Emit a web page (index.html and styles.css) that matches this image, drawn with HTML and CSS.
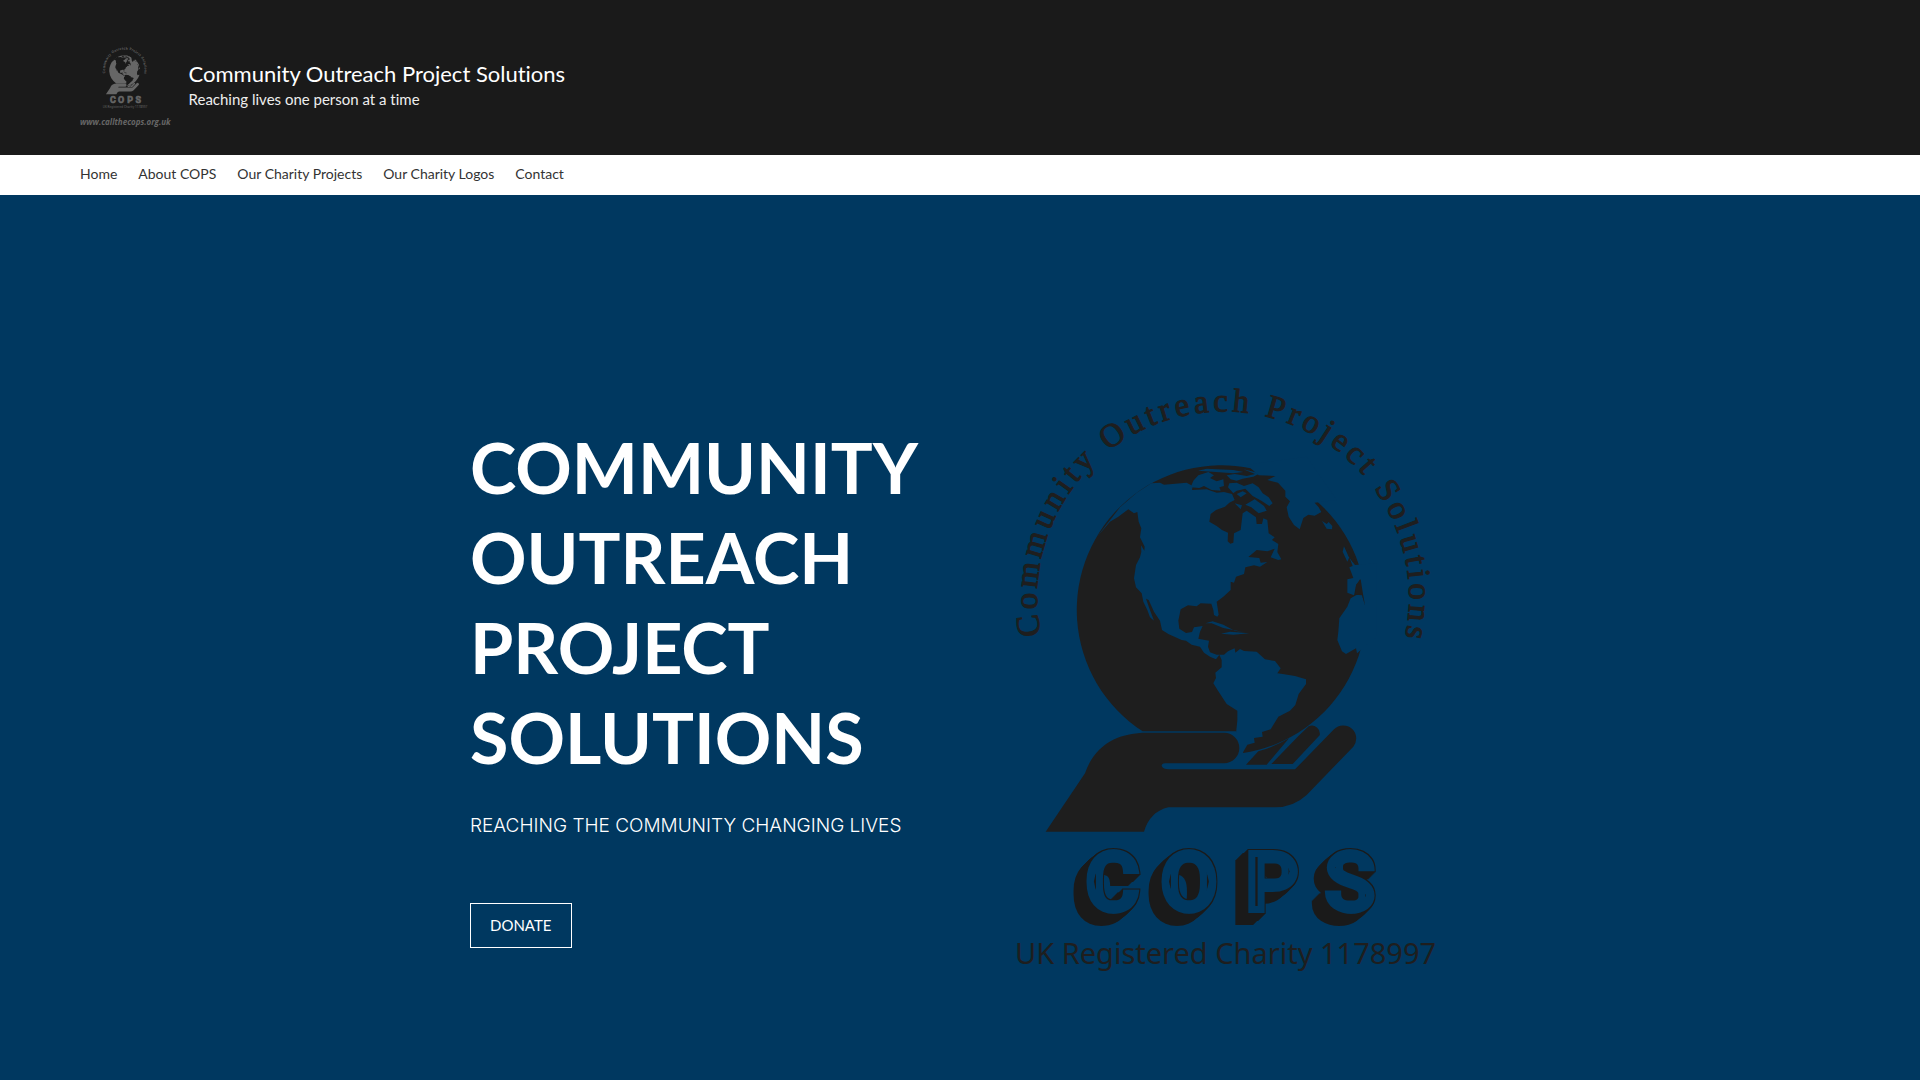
FILE: index.html
```html
<!DOCTYPE html>
<html lang="en">
<head>
    <meta charset="UTF-8">
    <meta name="viewport" content="width=device-width, initial-scale=1.0">
    <title>Community Outreach Project Solutions</title>
    <link rel="stylesheet" href="styles.css">
</head>
<body>
    <header class="header">
        <div class="brand">
            <svg class="brand-mark" viewBox="0 0 450 620" aria-hidden="true"><use href="#cops-logo"/></svg>
            <span class="brand-url">www.callthecops.org.uk</span>
        </div>
        <div class="brand-text">
            <p class="site-title">Community Outreach Project Solutions</p>
            <p class="tagline">Reaching lives one person at a time</p>
        </div>
    </header>

    <nav class="nav">
        <a href="#">Home</a>
        <a href="#">About COPS</a>
        <a href="#">Our Charity Projects</a>
        <a href="#">Our Charity Logos</a>
        <a href="#">Contact</a>
    </nav>

    <main class="hero">
        <div class="hero-inner">
            <div class="hero-text">
                <h1>COMMUNITY OUTREACH PROJECT SOLUTIONS</h1>
                <p class="subtitle">REACHING THE COMMUNITY CHANGING LIVES</p>
                <button class="donate" type="button">DONATE</button>
            </div>
            <svg class="hero-logo" viewBox="0 0 450 620" role="img" aria-label="COPS logo">
                <defs>
                    <path id="arc" d="M41 265 A186 186 0 1 1 401 282"/>
                    <!-- outline, centre line and solid block shadow for the COPS letters -->
                    <filter id="block" x="-20%" y="-20%" width="140%" height="140%" color-interpolation-filters="sRGB">
                        <feOffset in="SourceAlpha" dx="-1" dy="1" result="a"/>
                        <feMerge result="s1"><feMergeNode in="SourceAlpha"/><feMergeNode in="a"/></feMerge>
                        <feOffset in="s1" dx="-2" dy="2" result="b"/>
                        <feMerge result="s2"><feMergeNode in="s1"/><feMergeNode in="b"/></feMerge>
                        <feOffset in="s2" dx="-4" dy="4" result="c"/>
                        <feMerge result="s3"><feMergeNode in="s2"/><feMergeNode in="c"/></feMerge>
                        <feOffset in="s3" dx="-5" dy="4" result="d"/>
                        <feMerge result="s4"><feMergeNode in="s3"/><feMergeNode in="d"/></feMerge>
                        <feFlood class="ink-flood" result="ink"/>
                        <feComposite in="ink" in2="s4" operator="in" result="shadow"/>
                        <feMorphology in="SourceAlpha" operator="erode" radius="1" result="inner"/>
                        <feFlood class="paper-flood" result="paper"/>
                        <feComposite in="paper" in2="inner" operator="in" result="face"/>
                        <feMorphology in="SourceAlpha" operator="erode" radius="8" result="core"/>
                        <feComposite in="ink" in2="core" operator="in" result="line"/>
                        <feMerge>
                            <feMergeNode in="shadow"/>
                            <feMergeNode in="face"/>
                            <feMergeNode in="line"/>
                        </feMerge>
                    </filter>
                </defs>
                <symbol id="cops-logo" viewBox="0 0 450 620">
                    <text class="arc-text"><textPath href="#arc">Community Outreach Project Solutions</textPath></text>

                    <!-- globe -->
                    <svg x="60" y="80" width="320" height="310" viewBox="0 0 960 930">
                        <path class="ink" d="M248 844 A434 434 0 1 1 550 909 L528 844 Z"/>
                        <path class="paper" d="M110 262 L150 215 175 200 205 178 222 190 232 186 236 215 244 235 240 262 254 290 253 302 243 286 244 305 240 322 228 345 222 385 228 412 245 430 250 455 262 480 270 502 282 512 268 475 258 446 266 450 282 485 300 512 306 540 325 552 365 570 378 572 395 584 420 590 432 608 450 620 468 628 478 614 485 630 485 652 466 668 468 684 460 700 474 722 500 762 532 782 532 812 528 850 528 920 546 912 562 884 584 878 582 864 608 860 606 846 632 838 655 800 690 782 706 765 716 732 738 702 738 688 705 678 668 672 652 670 662 655 645 633 615 628 590 605 552 603 540 597 526 608 524 595 504 604 492 614 470 614 450 607 444 590 447 572 415 566 420 545 428 528 402 532 396 546 378 549 358 536 355 512 362 478 384 466 410 469 422 460 454 461 460 480 462 495 472 500 476 494 470 455 490 440 512 420 512 395 522 398 528 380 552 372 556 352 582 346 600 350 622 336 602 338 598 324 565 321 590 300 622 304 644 296 632 322 655 330 664 328 652 306 655 282 636 270 644 262 626 250 622 210 610 205 606 222 590 222 588 202 560 182 548 190 542 240 522 250 520 278 511 281 503 274 504 248 486 240 470 228 448 215 452 192 468 180 495 170 508 158 524 150 516 132 492 126 470 128 440 118 396 120 398 108 380 98 312 104 300 98 274 100 230 128 180 172 Z"/>
                        <path class="paper" d="M400 92 L415 76 445 66 462 76 450 84 470 94 490 88 492 108 478 112 482 122 455 120 432 108 418 114 392 112 Z M414 62 L440 56 520 60 550 66 520 70 Z M500 76 L524 72 560 78 585 72 550 58 600 70 580 80 548 86 530 92 512 88 Z M508 100 L530 98 552 108 578 100 596 112 608 130 626 142 638 160 628 168 604 152 578 138 556 116 530 122 520 130 504 112 Z M530 132 L548 124 560 130 542 142 Z M556 164 L584 148 612 168 620 182 596 190 574 172 Z M524 160 L546 166 542 178 Z"/>
                        <path class="paper" d="M560 44 L596 76 646 78 622 90 654 98 676 122 676 140 690 154 680 172 686 200 702 225 719 238 730 204 745 194 764 197 784 186 776 172 764 158 830 150 740 20 Z"/>
                        <path class="paper" d="M786 213 L800 222 806 216 817 228 816 238 800 236 Z M436 520 L458 514 490 524 524 542 550 546 520 540 490 534 455 520 Z M483 551 L510 545 568 550 520 554 Z"/>
                        <path class="paper" d="M885 345 L866 320 852 288 848 305 862 335 868 322 878 348 868 352 880 384 862 388 862 428 882 436 888 408 900 388 906 430 915 468 905 430 888 436 872 445 862 470 838 505 835 545 832 570 846 604 858 612 888 595 891 610 950 560 950 340 Z"/>
                        <path class="ink" d="M852 288 L868 300 886 334 878 336 Z M888 404 L902 388 908 426 915 466 906 436 886 434 Z"/>
                    </svg>

                    <!-- open hand -->
                    <svg x="30" y="330" width="350" height="140" viewBox="0 0 1050 420">
                        <path class="ink" d="M47 395 L165 220 C195 130 270 98 350 98 H582 A46 46 0 0 1 582 190 H405 Q395 190 395 198 Q400 208 415 208 H795 L912 88 A39 39 0 0 1 970 140 L830 285 Q790 322 735 322 H415 Q360 335 342 395 Z"/>
                        <path class="ink" d="M648 194 L685 154 Q730 142 777 115 L710 194 Z M724 192 L806 107 836 79 A24 24 0 0 1 869 106 L788 192 Z"/>
                    </svg>

                    <text class="cops" x="85 160 245 324" y="541">COPS</text>
                    <text class="charity" x="15" y="594">UK Registered Charity 1178997</text>
                </symbol>
                <use href="#cops-logo"/>
            </svg>
        </div>
    </main>
</body>
</html>
```
FILE: styles.css
```css
body {
    margin: 0;
    min-height: 100vh;
    display: flex;
    flex-direction: column;
    font-family: Lato, sans-serif;
    font-variant-ligatures: none;
    background-color: #003860;
}
p, h1 {
    margin: 0;
}
.header {
    display: flex;
    align-items: flex-start;
    gap: 18px;
    padding: 45px 80px 25px;
    background-color: #1a1a1a;
    color: #fff;
}
.brand {
    --ink: #666;
    --paper: #1a1a1a;
    --block: none;
    display: flex;
    flex-direction: column;
    align-items: center;
    gap: 3px;
    color: #666;
}
.brand-mark {
    width: 48px;
    height: 66px;
}
.brand-url {
    font: italic bold 8px/16px "Open Sans", sans-serif;
}
.brand-text {
    padding-top: 15px;
}
.site-title {
    font-size: 22px;
    line-height: 28px;
}
.tagline {
    font-size: 15px;
    line-height: 22px;
    color: #eee;
}
.nav {
    display: flex;
    gap: 21px;
    padding: 0 80px 2px;
    background-color: #fff;
}
.nav a {
    font-size: 14px;
    line-height: 38px;
    color: #333;
    text-decoration: none;
}
.hero {
    --ink: #1e1e1e;
    --paper: #003860;
    --block: url(#block);
    flex: 1;
    padding: 175px 20px 80px;
    color: #fff;
}
.hero-inner {
    display: grid;
    grid-template-columns: 450px 450px;
    justify-content: space-between;
    max-width: 980px;
    margin: 0 auto;
}
.hero-text {
    padding-top: 52px;
}
h1 {
    font-size: 70px;
    font-weight: bold;
    line-height: 90px;
}
.subtitle {
    margin-top: 32px;
    font-family: Inter, sans-serif;
    font-size: 19px;
    font-weight: 300;
    line-height: 24px;
}
.donate {
    margin-top: 65px;
    padding: 0 19px;
    font-family: Lato, sans-serif;
    font-size: 15px;
    line-height: 43px;
    color: #fff;
    background: none;
    border: 1px solid #fff;
    cursor: pointer;
}
.hero-logo {
    width: 100%;
}
.ink {
    fill: var(--ink);
}
.paper {
    fill: var(--paper);
}
.ink-flood {
    flood-color: #1a1a1a;
}
.paper-flood {
    flood-color: #003860;
}
.arc-text {
    font-family: "Liberation Serif", serif;
    font-size: 33px;
    letter-spacing: 4px;
    fill: var(--ink);
    stroke: var(--ink);
    stroke-width: 1px;
}
.cops {
    font-family: Roboto, sans-serif;
    font-size: 84px;
    font-weight: bold;
    fill: var(--ink);
    stroke: var(--ink);
    stroke-width: 6px;
    filter: var(--block);
}
.charity {
    font-family: "Noto Sans", sans-serif;
    font-size: 29px;
    fill: var(--ink);
}
```
